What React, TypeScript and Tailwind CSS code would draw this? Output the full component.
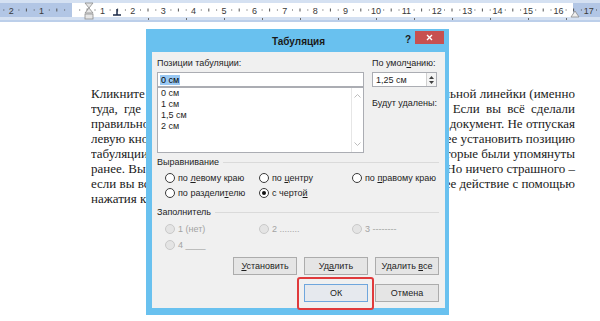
import React from "react";

const lines: { l: string; r: string; wide?: boolean }[] = [
  { l: "Кликните левой кнопкой мыши в нужном месте", r: "горизонтальной линейки (именно" },
  { l: "туда, где должна располагаться табуляция).", r: "Если вы всё сделали", wide: true },
  { l: "правильно, то маркер появится на линейке, а текст сместится в", r: "документ. Не отпуская" },
  { l: "левую кнопку мыши, перемещайте маркер, чтобы", r: "точнее установить позицию" },
  { l: "табуляции. Вы также можете использовать способы,", r: "которые были упомянуты" },
  { l: "ранее. Вы можете случайно удалить маркер табуляции.", r: "Но ничего страшного –" },
  { l: "если вы всё же ошиблись, то просто отмените", r: "последнее действие с помощью" },
];

function Ruler() {
  const cm = 30.4;
  const origin = 72;
  const nums: React.ReactNode[] = [];
  const marks: React.ReactNode[] = [];
  for (let n = -3; n <= 18; n++) {
    const x = origin + n * cm;
    if (n !== 0 && n >= -2 && n <= 17) {
      nums.push(
        <text key={"n" + n} x={x} y={13.5} fontSize={9} textAnchor="middle" fill="#3a3a3a" fontFamily="Liberation Sans, Arial, sans-serif">
          {Math.abs(n)}
        </text>
      );
    }
    marks.push(<rect key={"d1" + n} x={x + 7.2} y={9.5} width={1} height={1} fill="#555" />);
    marks.push(<rect key={"t" + n} x={x + 14.7} y={8.5} width={1} height={3} fill="#555" />);
    marks.push(<rect key={"d2" + n} x={x + 22.5} y={9.5} width={1} height={1} fill="#555" />);
  }
  const tabs: React.ReactNode[] = [];
  for (let k = 2; k <= 13; k++) {
    tabs.push(<rect key={"k" + k} x={origin + k * 38} y={18} width={1} height={2} fill="#6a6a6a" />);
  }
  return (
    <div className="h-[22px] w-[600px]">
      <svg width="600" height="22" viewBox="0 0 600 22">
        <rect x="0" y="0" width="600" height="22" fill="#d5e1f2" />
        <rect x="0" y="3" width="600" height="14" fill="#b2c6e5" />
        <rect x="72" y="3" width="501" height="14" fill="#ffffff" />
        <rect x="0" y="20" width="600" height="2" fill="#bccfea" />
        {marks}
        {nums}
        {tabs}
        <path d="M85 3 H93 L89 8 Z" fill="#e6e6e6" stroke="#8c8c8c" strokeWidth="0.8" />
        <path d="M85 13 H93 L89 8 Z" fill="#e6e6e6" stroke="#8c8c8c" strokeWidth="0.8" />
        <rect x="85" y="14" width="8" height="5" fill="#e6e6e6" stroke="#8c8c8c" strokeWidth="0.8" />
        <path d="M117 9 V15 M113 15 H121" stroke="#1c2b4a" strokeWidth="1.5" fill="none" />
        <path d="M571 17 H579 L575 11 Z" fill="#eeeeee" stroke="#8a8a8a" strokeWidth="0.8" />
      </svg>
    </div>
  );
}

function U({ children }: { children: React.ReactNode }) {
  return <span className="underline underline-offset-[1px]">{children}</span>;
}

function Radio({ label, checked, disabled }: { label: React.ReactNode; checked?: boolean; disabled?: boolean }) {
  return (
    <div className="flex items-center h-[12px]">
      <span
        className={
          disabled
            ? "w-[10px] h-[10px] rounded-full border border-[#c9c9c9] bg-[#e4e4e4] flex items-center justify-center shrink-0"
            : "w-[10px] h-[10px] rounded-full border border-[#3a3a3a] bg-white flex items-center justify-center shrink-0"
        }
      >
        {checked && <span className="w-[4px] h-[4px] rounded-full bg-[#111]" />}
      </span>
      <span className={disabled ? "ml-[3px] text-[#a3a3a3] whitespace-nowrap" : "ml-[3px] text-[#1e1e1e] whitespace-nowrap"}>{label}</span>
    </div>
  );
}

function Btn({ children, primary }: { children: React.ReactNode; primary?: boolean }) {
  return (
    <div
      className={
        primary
          ? "w-[64px] h-[18px] border border-[#6fa6dd] bg-[#e6e9ee] flex items-center justify-center text-[#1e1e1e]"
          : "w-[64px] h-[18px] border border-[#acacac] bg-[#e5e5e5] flex items-center justify-center text-[#1e1e1e]"
      }
    >
      <span className="whitespace-pre">{children}</span>
    </div>
  );
}

function GroupLabel({ children }: { children: React.ReactNode }) {
  return (
    <div className="flex items-center h-[12px]">
      <span className="text-[#1e1e1e] whitespace-nowrap">{children}</span>
      <div className="flex-1 h-px bg-[#dadada] ml-[4px]" />
    </div>
  );
}

function Dialog() {
  return (
    <div className="absolute left-[146px] top-[29px] w-[303px] h-[286px] bg-[#69c1ef] flex flex-col pl-[6px] pr-[4px] pb-[7px] font-['Liberation_Sans',Arial,sans-serif] text-[9px] leading-[12px]">
      <div className="relative h-[23px] shrink-0 flex items-center justify-center pt-[2px]">
        <span className="font-bold text-[10px] text-[#1a1a1a]">Табуляция</span>
        <span className="absolute left-[253px] top-[5px] font-bold text-[10px] text-[#1a1a1a]">?</span>
        <div className="absolute right-[1px] top-[2px] w-[29px] h-[13px] bg-[#c75050] flex items-center justify-center">
          <svg width="7" height="7" viewBox="0 0 7 7">
            <path d="M1 1 L6 6 M6 1 L1 6" stroke="#fff" strokeWidth="1.4" />
          </svg>
        </div>
      </div>
      <div className="flex-1 bg-[#f0f0f0] pl-[5px] pr-[6px] pt-[5px] flex flex-col">
        <div className="flex">
          <div className="w-[207px] flex flex-col">
            <div className="h-[12px] text-[#1e1e1e]">Позиции табуляции:</div>
            <div className="mt-[3px] h-[15px] bg-white border border-[#abadb3] flex items-center pl-[2px]">
              <span className="bg-[#99c8f3] text-black px-[1px] leading-[10px]">0 см</span>
            </div>
            <div className="h-[66px] bg-white border border-[#abadb3] flex">
              <div className="flex-1 pl-[3px] leading-[11px] text-[#1e1e1e]">
                <div>0 см</div>
                <div>1 см</div>
                <div>1,5 см</div>
                <div>2 см</div>
              </div>
              <div className="w-[12px] border-l border-[#e6e6e6] flex flex-col justify-between items-center py-[6px]">
                <svg width="7" height="4" viewBox="0 0 7 4">
                  <path d="M0.5 3.5 L3.5 0.5 L6.5 3.5" stroke="#bdbdbd" fill="none" />
                </svg>
                <svg width="7" height="4" viewBox="0 0 7 4">
                  <path d="M0.5 0.5 L3.5 3.5 L6.5 0.5" stroke="#bdbdbd" fill="none" />
                </svg>
              </div>
            </div>
          </div>
          <div className="ml-[8px] w-[65px] flex flex-col">
            <div className="h-[12px] text-[#1e1e1e] whitespace-nowrap">
              По умол<U>ч</U>анию:
            </div>
            <div className="mt-[3px] h-[15px] bg-white border border-[#abadb3] flex items-center">
              <span className="flex-1 pl-[3px] text-[#1e1e1e]">1,25 см</span>
              <div className="w-[10px] h-full border-l border-[#d0d0d0] bg-[#f4f4f4] flex flex-col items-center justify-center gap-[2px]">
                <svg width="5" height="3" viewBox="0 0 5 3">
                  <path d="M0 3 L2.5 0 L5 3 Z" fill="#404040" />
                </svg>
                <svg width="5" height="3" viewBox="0 0 5 3">
                  <path d="M0 0 L2.5 3 L5 0 Z" fill="#404040" />
                </svg>
              </div>
            </div>
            <div className="mt-[10px] h-[12px] text-[#1e1e1e] whitespace-nowrap">Будут удалены:</div>
          </div>
        </div>

        <div className="mt-[3px]">
          <GroupLabel>Выравнивание</GroupLabel>
        </div>
        <div className="mt-[4px] pl-[8px] grid grid-cols-[94px_93px_1fr] gap-y-[3px]">
          <Radio label={<>по <U>л</U>евому краю</>} />
          <Radio label={<>по <U>ц</U>ентру</>} />
          <Radio label={<>по <U>п</U>равому краю</>} />
          <Radio label={<>по раздели<U>т</U>елю</>} />
          <Radio label={<>с черто<U>й</U></>} checked />
        </div>

        <div className="mt-[7px]">
          <GroupLabel>Заполнитель</GroupLabel>
        </div>
        <div className="mt-[5px] pl-[8px] grid grid-cols-[94px_93px_1fr] gap-y-[4px]">
          <Radio label="1 (нет)" disabled />
          <Radio label="2 ........" disabled />
          <Radio label="3 --------" disabled />
          <Radio label="4 ____" disabled />
        </div>

        <div className="mt-[6px] flex justify-end gap-[7px]">
          <Btn>
            <U>У</U>становить
          </Btn>
          <Btn>
            Уд<U>а</U>лить
          </Btn>
          <Btn>
            {"Удалить "}
            <U>в</U>се
          </Btn>
        </div>
        <div className="mt-[9px] flex justify-end gap-[7px]">
          <Btn primary>ОК</Btn>
          <Btn>Отмена</Btn>
        </div>
      </div>
    </div>
  );
}

export default function App() {
  return (
    <div className="relative w-[600px] h-[321px] overflow-hidden bg-white">
      <Ruler />
      <div className="pt-[64px] pl-[91px] font-['Liberation_Serif','Times_New_Roman',serif] text-[13px] leading-[15px] text-[#1a1a1a]">
        <div className="w-[484px]">
          {lines.map((ln, i) => (
            <div key={i} className={ln.wide ? "h-[15px] flex justify-between [word-spacing:3px]" : "h-[15px] flex justify-between"}>
              <span className="min-w-0 overflow-hidden whitespace-nowrap">{ln.l}</span>
              <span className="shrink-0 whitespace-nowrap pl-[4px]">{ln.r}</span>
            </div>
          ))}
          <div className="h-[15px]">нажатия клавиш Ctrl+Z.</div>
        </div>
      </div>
      <Dialog />
      <div className="absolute left-[297px] top-[277px] w-[77px] h-[33px] border-2 border-[#e03a3c] rounded-[3px]" />
    </div>
  );
}
